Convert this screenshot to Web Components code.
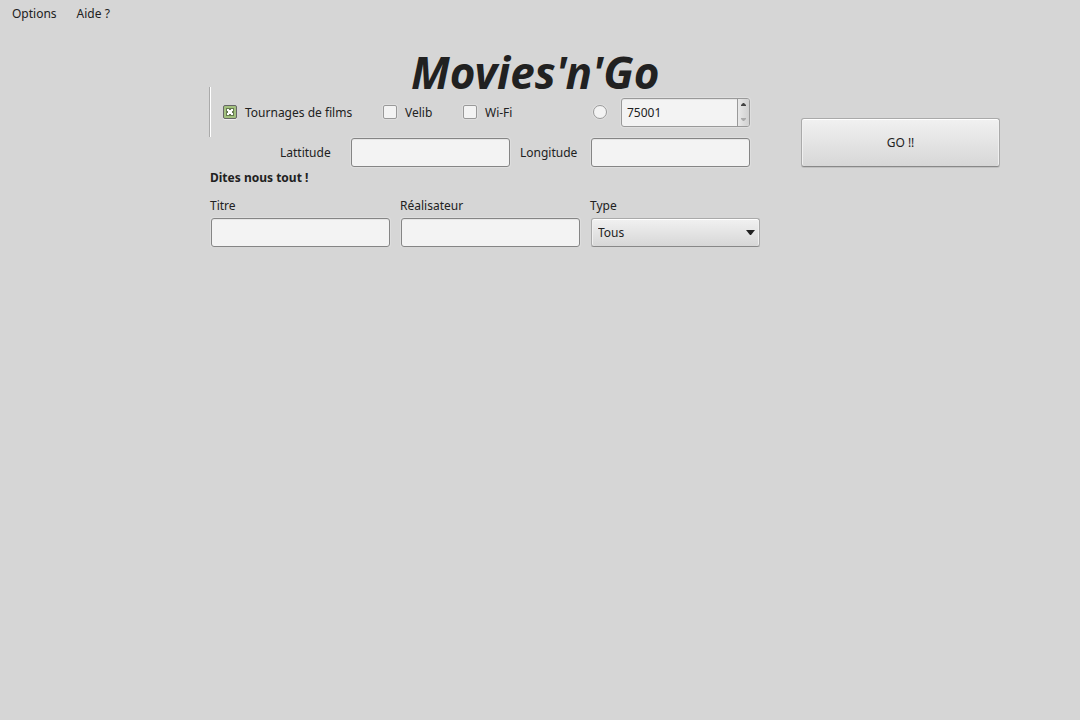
<!DOCTYPE html>
<html lang="fr">
<head>
<meta charset="utf-8">
<title>Movies'n'Go</title>
<style>
html { background: #d6d6d6; }
body { margin: 0; font: 12px/20px "Noto Sans", sans-serif; color: #212121; }
</style>
</head>
<body>
<movies-app></movies-app>
<script>
const base = `*{box-sizing:border-box}
input,select,button{font:inherit;color:inherit;margin:0}`;

function define(name, html, setup) {
  const tpl = document.createElement('template');
  tpl.innerHTML = html;
  customElements.define(name, class extends HTMLElement {
    constructor() {
      super();
      this.attachShadow({ mode: 'open' }).append(tpl.content.cloneNode(true));
    }
    connectedCallback() { if (setup) setup(this, this.shadowRoot); }
  });
}

define('menu-item', `<style>${base}
:host{display:block}
button{display:block;border:0;background:none;padding:0;line-height:20px;white-space:nowrap}
</style><button type="button"><slot></slot></button>`);

define('menu-bar', `<style>
:host{display:flex;gap:20px;padding:4px 12px 3px}
</style><slot></slot>`);

define('tick-option', `<style>${base}
:host{display:block}
label{display:flex;align-items:center;white-space:nowrap;gap:8px;padding-left:3px}
span{padding-top:2px}
input{appearance:none;width:14px;height:14px;flex:none;border:1px solid #999;border-radius:2px;background:#f3f3f3;box-shadow:0 0 0 1px #dedede}
input[type=radio]{border-radius:50%}
input[type=checkbox]:checked{border-color:#666;box-shadow:inset 0 0 0 1px #a3c17f,0 1px 0 #eee;
background:#a3c17f url("data:image/svg+xml,%3Csvg xmlns='http://www.w3.org/2000/svg' viewBox='0 0 12 12' shape-rendering='crispEdges'%3E%3Cpath fill='%23667b51' d='M2 2h8v8H2z'/%3E%3Cpath fill='%23fff' d='M3 3h2v1h2V3h2v2H8v2h1v2H7V8H5v1H3V7h1V5H3z'/%3E%3C/svg%3E") center/12px 12px}
</style><label><input><span><slot></slot></span></label>`, (host, root) => {
  const input = root.querySelector('input');
  input.type = host.getAttribute('type') || 'checkbox';
  input.checked = host.hasAttribute('checked');
  if (host.title) input.setAttribute('aria-label', host.title);
});

const box = `border:1px solid #858585;border-radius:3px;background:#f3f3f3;box-shadow:0 0 0 1px #dedede,inset 0 1px 0 #e6e6e6`;

define('text-field', `<style>${base}
:host{display:grid;align-items:center}
:host([inline]){grid-template-columns:70fr 160fr}
label{line-height:20px;white-space:nowrap;padding-top:2px}
:host(:not([inline])) label{padding-top:1px;margin-bottom:1px}
input{display:block;width:calc(100% - 1px);min-width:0;height:29px;margin:1px 0 0 1px;padding:0 5px;outline:0;${box}}
</style><label for="f"><slot></slot></label><input id="f" type="text">`);

define('spin-field', `<style>${base}
:host{display:block;padding:1px 0 0 1px}
div{display:flex;height:29px;overflow:hidden;${box};border-color:#999}
input{appearance:textfield;flex:1;min-width:0;border:0;background:none;padding:0 5px;outline:0}
input::-webkit-inner-spin-button{appearance:none}
span{display:grid;grid-template-rows:1fr 1fr;width:12px;border-left:1px solid #999;background:linear-gradient(90deg,#e8e8e8,#d0d0d0)}
button{display:grid;place-items:center;border:0;padding:0;background:none}
button:first-child{padding-bottom:2px}button:last-child{padding-top:2px}
svg{display:block;width:5px;height:4px}
</style><div><input type="number" value="75001" min="75001" max="75020" aria-label="Code postal"><span>
<button type="button" aria-label="Augmenter"><svg viewBox="0 0 5 4"><path fill="#444" d="M2 0h1l2 2v1H0V2z"/></svg></button>
<button type="button" aria-label="Diminuer"><svg viewBox="0 0 5 4"><path fill="#aaa" d="M0 0h5v1L3 3H2L0 1z"/></svg></button></span></div>`, (host, root) => {
  const input = root.querySelector('input');
  const [up, down] = root.querySelectorAll('button');
  up.onclick = () => input.stepUp();
  down.onclick = () => input.stepDown();
});

const raised = `border:1px solid #aaa;border-bottom-color:#888;border-radius:3px;background:linear-gradient(#f1f1f1,#d7d7d7);box-shadow:0 1px 0 #c0c0c0,inset 0 1px 0 #fff,inset 1px 0 0 #f0f0f0,inset -1px 0 0 #f0f0f0`;

define('type-select', `<style>${base}
:host{display:grid}
label{line-height:20px;padding-top:1px;margin-bottom:1px}
div{display:grid;padding:1px 0 0 1px}
select,svg{grid-area:1/1}
select{appearance:none;width:100%;height:29px;padding:0 24px 0 6px;${raised}}
svg{width:9px;height:5px;justify-self:end;align-self:center;margin-right:5px;pointer-events:none}
</style><label for="s"><slot></slot></label><div><select id="s"><option>Tous</option></select>
<svg viewBox="0 0 9 5"><path fill="#212121" d="M0 0h9L5 5H4z"/></svg></div>`);

define('go-button', `<style>${base}
:host{display:block;padding:1px 0 0 1px}
button{display:block;width:100%;height:49px;padding:0;${raised}}
</style><button type="button"><slot></slot></button>`);

define('movies-app', `<style>${base}
:host{display:block}
main{display:grid;grid-template-columns:55fr 20fr;column-gap:40px;padding:29px 80px 0 210px}
h1{font-size:44px;line-height:32px;font-style:italic;font-weight:700;margin:0;padding-left:201px;white-space:nowrap;grid-column:1/-1}
.filters{display:grid;grid-template-columns:160fr 80fr 130fr 30fr 130fr 10fr;align-items:center;height:50px;margin:-1px 0 0 -1px;padding-left:10px;border-left:1px solid #aaa;box-shadow:inset 1px 0 0 #fff}
.coords{display:grid;grid-template-columns:230fr 230fr;column-gap:10px;padding:0 10px 0 70px}
h2{font-size:12px;line-height:20px;margin:0;padding:1px 0 7px}
.details{display:grid;grid-template-columns:180fr 180fr 170fr;column-gap:10px}
go-button{margin-top:29px}
</style>
<menu-bar role="navigation"><menu-item>Options</menu-item><menu-item>Aide ?</menu-item></menu-bar>
<main>
<h1>Movies'n'Go</h1>
<form>
<div class="filters">
<tick-option checked>Tournages de films</tick-option>
<tick-option>Velib</tick-option>
<tick-option>Wi-Fi</tick-option>
<tick-option type="radio" title="Par code postal"></tick-option>
<spin-field></spin-field>
</div>
<div class="coords">
<text-field inline>Lattitude</text-field>
<text-field inline>Longitude</text-field>
</div>
<h2>Dites nous tout !</h2>
<div class="details">
<text-field>Titre</text-field>
<text-field>Réalisateur</text-field>
<type-select>Type</type-select>
</div>
</form>
<go-button>GO !!</go-button>
</main>`);
</script>
</body>
</html>
